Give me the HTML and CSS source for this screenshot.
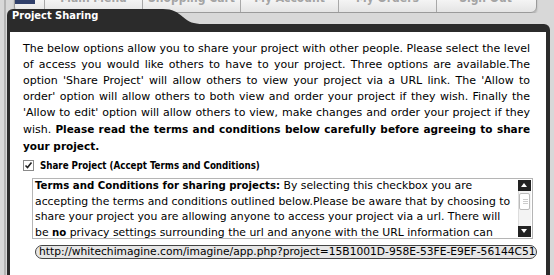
FILE: index.html
```html
<!DOCTYPE html>
<html lang="en">
<head>
    <meta charset="UTF-8">
    <title>Project Sharing</title>
    <link rel="stylesheet" href="styles.css">
</head>
<body>
    <!-- Barra de navegación de la página (queda detrás del diálogo) -->
    <div class="topnav">
        <div class="nav-logo"></div>
        <ul class="nav-tabs">
            <li>Main Menu</li>
            <li>Shopping Cart</li>
            <li>My Account</li>
            <li>My Orders</li>
            <li>Sign Out</li>
        </ul>
    </div>

    <!-- Diálogo para compartir el proyecto -->
    <div class="dialog">
        <div class="dlg-head">
            <div class="dlg-tab">Project Sharing</div>
            <svg class="dlg-curve" width="40" height="15" viewBox="0 0 40 15">
                <path d="M0 0 C10 0 14 3 20 8 C26 13 30 15 40 15 L0 15 Z" fill="#2b2b2b"/>
            </svg>
        </div>
        <div class="dlg-bar"></div>

        <div class="dlg-body">
            <p class="intro">The below options allow you to share your project with other people. Please select the level of access you would like others to have to your project. Three options are available.The option 'Share Project' will allow others to view your project via a URL link. The 'Allow to order' option will allow others to both view and order your project if they wish. Finally the 'Allow to edit' option will allow others to view, make changes and order your project if they wish. <b>Please read the terms and conditions below carefully before agreeing to share your project.</b></p>

            <label class="share-opt">
                <span class="check">
                    <svg width="9" height="9" viewBox="0 0 9 9"><path d="M1.5 4.5 L3.5 6.5 L7.5 1.5" fill="none" stroke="#222" stroke-width="1.6"/></svg>
                </span>
                Share Project (Accept Terms and Conditions)
            </label>

            <div class="terms">
                <div class="terms-text"><b>Terms and Conditions for sharing projects:</b> By selecting this checkbox you are accepting the terms and conditions outlined below.Please be aware that by choosing to share your project you are allowing anyone to access your project via a url. There will be <b>no</b> privacy settings surrounding the url and anyone with the URL information can view your project.</div>
                <div class="scrollbar">
                    <span class="sb-btn sb-up"></span>
                    <span class="sb-track"><span class="sb-thumb"></span></span>
                    <span class="sb-btn sb-down"></span>
                </div>
            </div>

            <div class="url-field">http://whitechimagine.com/imagine/app.php?project=15B1001D-958E-53FE-E9EF-56144C51BA21</div>
        </div>
    </div>
</body>
</html>
```

FILE: styles.css
```css
body {
    margin: 0;
    background: linear-gradient(to right, transparent 4px, #b4b4b4 4px, #b4b4b4 6px, transparent 6px), #d8d8d8;
    font-family: "DejaVu Sans", sans-serif;
    color: #000;
    overflow: hidden;
}

/* navegación */
.topnav {
    display: flex;
    width: 521px;
    height: 20px;
    margin: -9px 0 0 14px;
    border: 1px solid #9a9a9a;
    border-radius: 0 0 6px 6px;
    background: linear-gradient(#ffffff, #e4e4e4);
    box-shadow: 0 2px 2px rgba(0, 0, 0, 0.2);
}

.nav-logo {
    width: 20px;
    height: 12px;
    background-color: #2f3f6a;
}

.nav-tabs {
    display: flex;
    margin: 0 0 0 9px;
    padding: 0;
    list-style: none;
}

.nav-tabs li {
    width: 97px;
    border-left: 1px solid #a8a8a8;
    text-align: center;
    font-family: "DejaVu Sans Condensed", "DejaVu Sans", sans-serif;
    font-size: 12px;
    font-weight: bold;
    line-height: 12px;
    color: #a4a4a4;
}

/* diálogo */
.dialog {
    position: absolute;
    left: 7px;
    top: 9px;
    width: 543px;
}

.dlg-head {
    display: flex;
    height: 15px;
}

.dlg-tab {
    width: 151px;
    padding-left: 5px;
    background-color: #2b2b2b;
    border-top-left-radius: 6px;
    color: #fff;
    font-family: "DejaVu Sans Condensed", "DejaVu Sans", sans-serif;
    font-size: 11px;
    font-weight: bold;
    line-height: 14px;
}

.dlg-curve {
    display: block;
}

.dlg-bar {
    height: 8px;
    background-color: #2b2b2b;
    border-top-right-radius: 6px;
}

.dlg-body {
    height: 260px;
    padding: 9px 16px 0 13px;
    background-color: #fff;
    border: solid #2b2b2b;
    border-width: 0 4px 0 3px;
}

.intro {
    margin: 0;
    font-size: 11px;
    line-height: 16px;
    text-align: justify;
}

.intro b {
    font-size: 10.5px;
}

.share-opt {
    display: flex;
    align-items: center;
    height: 16px;
    margin-top: 2px;
    font-family: "DejaVu Sans Condensed", "DejaVu Sans", sans-serif;
    font-size: 9.7px;
    font-weight: bold;
}

.check {
    display: flex;
    align-items: center;
    justify-content: center;
    width: 11px;
    height: 11px;
    margin-right: 6px;
    border: 1px solid #8a8a8a;
    box-sizing: border-box;
    background-color: #fff;
}

.terms {
    display: flex;
    width: 501px;
    height: 61px;
    margin: 5px 0 0 9px;
    border: 1px solid #b5b5b5;
    box-sizing: border-box;
}

.terms-text {
    flex: 1;
    margin-top: -1px;
    padding: 0 0 0 2px;
    overflow: hidden;
    font-size: 10.85px;
    line-height: 15.6px;
}

.terms-text b {
    font-size: 10.2px;
}

.scrollbar {
    display: flex;
    flex-direction: column;
    width: 13px;
    margin: 1px;
}

.sb-btn {
    position: relative;
    height: 11px;
    background-color: #222;
}

.sb-btn::after {
    content: "";
    position: absolute;
    left: 3px;
    top: 3px;
    border-left: 3.5px solid transparent;
    border-right: 3.5px solid transparent;
}

.sb-up::after {
    border-bottom: 4px solid #fff;
}

.sb-down::after {
    border-top: 4px solid #fff;
}

.sb-track {
    flex: 1;
    background-color: #f3f3f3;
    border-left: 1px solid #ddd;
}

.sb-thumb {
    display: block;
    height: 15px;
    margin: 2px 1px 0 0;
    border: 1px solid #bbb;
    border-radius: 2px;
    background: #fff repeating-linear-gradient(#ccc 0, #ccc 1px, transparent 1px, transparent 2px) no-repeat 3px 5px / 5px 5px;
}

.url-field {
    width: 494px;
    height: 12px;
    margin: 6px 0 0 12px;
    padding: 0 3px;
    border: 1px solid #444;
    border-radius: 7px;
    background-color: #e6e6e6;
    font-size: 10.7px;
    line-height: 12px;
    white-space: nowrap;
    overflow: hidden;
}
```
